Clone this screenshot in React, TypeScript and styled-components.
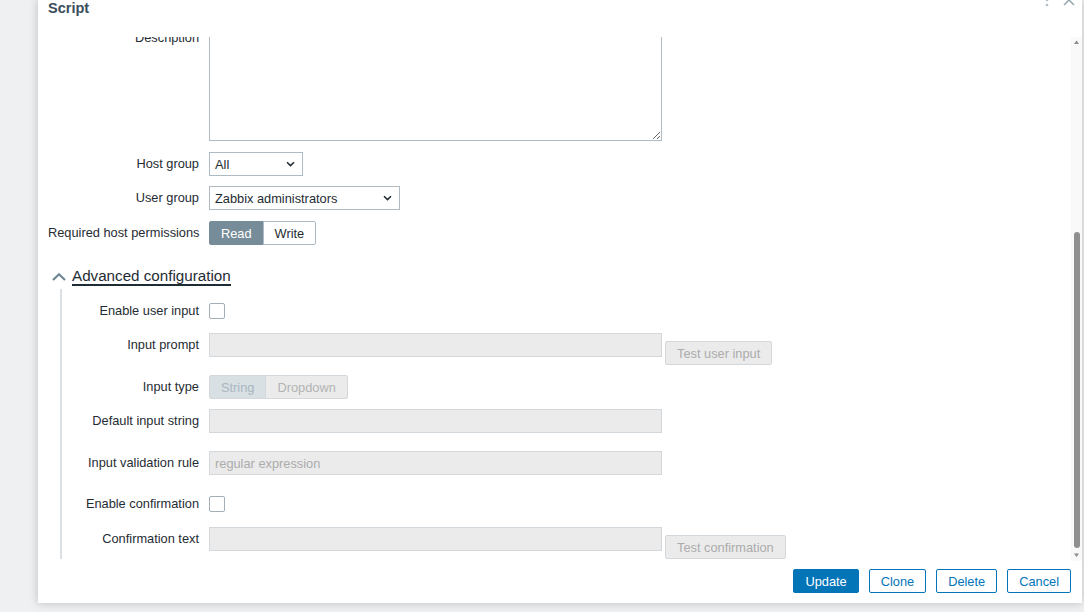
import React from "react";
import styled, {createGlobalStyle, css} from "styled-components";

const GlobalStyle = createGlobalStyle`
    html, body {
        margin: 0;
        padding: 0;
    }

    body {
        background: #eef0f2;
        font-family: "Liberation Sans", Arial, sans-serif;
        font-size: 12.8px;
        color: #1f2c33;
        overflow: hidden;
    }
`

const LABEL_W = 161
const SECTION_LABEL_W = 147

const ChevronDown = () => (
    <svg width="9" height="6" viewBox="0 0 9 6">
        <path d="M1 1.2 L4.5 4.6 L8 1.2" fill="none" stroke="#1f2c33" strokeWidth="1.5"/>
    </svg>
)

const ChevronUp = () => (
    <svg width="14" height="8" viewBox="0 0 14 8">
        <path d="M1 7 L7 1.3 L13 7" fill="none" stroke="#6f8793" strokeWidth="2.2"/>
    </svg>
)

const KebabIcon = () => (
    <svg width="16" height="16" viewBox="0 0 16 16">
        <circle cx="8" cy="3" r="1.3" fill="#b3bdc4"/>
        <circle cx="8" cy="8" r="1.3" fill="#b3bdc4"/>
        <circle cx="8" cy="13" r="1.3" fill="#b3bdc4"/>
    </svg>
)

const CloseIcon = () => (
    <svg width="16" height="16" viewBox="0 0 16 16">
        <path d="M3 3 L13 13 M13 3 L3 13" stroke="#9aa8b2" strokeWidth="1.6"/>
    </svg>
)

const ArrowUp = () => (
    <svg width="11" height="12" viewBox="0 0 11 12">
        <polygon points="3,7 8,7 5.5,3.5" fill="#8a8a8a"/>
    </svg>
)

const ArrowDown = () => (
    <svg width="11" height="12" viewBox="0 0 11 12">
        <polygon points="3,4.5 8,4.5 5.5,8" fill="#8a8a8a"/>
    </svg>
)

export default function App() {
    return (
        <>
            <GlobalStyle/>
            <Page>
                <Dialog>
                    <Header>
                        <Title>Script</Title>
                        <HeaderIcons>
                            <KebabIcon/>
                            <CloseIcon/>
                        </HeaderIcons>
                    </Header>
                    <Body>
                        <ScrollArea>
                            <Form>
                                <Row>
                                    <Label $w={LABEL_W}>Name</Label>
                                    <TextInput $w={453} defaultValue="Ping"/>
                                </Row>
                                <Row $mt={10}>
                                    <Label $w={LABEL_W}>Scope</Label>
                                    <Seg>
                                        <SegItem>Action operation</SegItem>
                                        <SegItem $on>Manual host action</SegItem>
                                        <SegItem>Manual event action</SegItem>
                                    </Seg>
                                </Row>
                                <Row $mt={10}>
                                    <Label $w={LABEL_W}>Menu path</Label>
                                    <TextInput $w={453} placeholder="<sub-menu/sub-menu/...>"/>
                                </Row>
                                <Row $mt={10}>
                                    <Label $w={LABEL_W}>Type</Label>
                                    <Seg>
                                        <SegItem>URL</SegItem>
                                        <SegItem>Webhook</SegItem>
                                        <SegItem $on>Script</SegItem>
                                        <SegItem>SSH</SegItem>
                                        <SegItem>Telnet</SegItem>
                                        <SegItem>IPMI</SegItem>
                                    </Seg>
                                </Row>
                                <Row $mt={10}>
                                    <Label $w={LABEL_W}>Execute on</Label>
                                    <Seg>
                                        <SegItem>Zabbix agent</SegItem>
                                        <SegItem>Zabbix server (proxy)</SegItem>
                                        <SegItem $on>Zabbix server</SegItem>
                                    </Seg>
                                </Row>
                                <Row $mt={10}>
                                    <Label $w={LABEL_W}>Commands</Label>
                                    <TextArea $h={60} defaultValue="ping -c 3 {HOST.CONN}; case $? in [01]) true;; *) false;; esac"/>
                                </Row>
                                <Row $mt={10}>
                                    <Label $w={LABEL_W}>Description</Label>
                                    <TextArea $h={115}/>
                                </Row>
                                <Row $mt={11}>
                                    <Label $w={LABEL_W}>Host group</Label>
                                    <SelectBox $w={94}>
                                        <span>All</span>
                                        <ChevronDown/>
                                    </SelectBox>
                                </Row>
                                <Row $mt={10}>
                                    <Label $w={LABEL_W}>User group</Label>
                                    <SelectBox $w={191}>
                                        <span>Zabbix administrators</span>
                                        <ChevronDown/>
                                    </SelectBox>
                                </Row>
                                <Row $mt={11}>
                                    <Label $w={LABEL_W}>Required host permissions</Label>
                                    <Seg>
                                        <SegItem $on>Read</SegItem>
                                        <SegItem>Write</SegItem>
                                    </Seg>
                                </Row>

                                <AdvHeader>
                                    <ChevronUp/>
                                    <AdvTitle>Advanced configuration</AdvTitle>
                                </AdvHeader>

                                <Section>
                                    <Row $mt={1}>
                                        <Label $w={SECTION_LABEL_W}>Enable user input</Label>
                                        <Checkbox type="checkbox"/>
                                    </Row>
                                    <Row $mt={10}>
                                        <Label $w={SECTION_LABEL_W}>Input prompt</Label>
                                        <TextInput $w={453} disabled/>
                                        <SideButton disabled>Test user input</SideButton>
                                    </Row>
                                    <Row $mt={10}>
                                        <Label $w={SECTION_LABEL_W}>Input type</Label>
                                        <Seg>
                                            <SegItem $on $off disabled>String</SegItem>
                                            <SegItem $off disabled>Dropdown</SegItem>
                                        </Seg>
                                    </Row>
                                    <Row $mt={10}>
                                        <Label $w={SECTION_LABEL_W}>Default input string</Label>
                                        <TextInput $w={453} disabled/>
                                    </Row>
                                    <Row $mt={18}>
                                        <Label $w={SECTION_LABEL_W}>Input validation rule</Label>
                                        <TextInput $w={453} disabled placeholder="regular expression"/>
                                    </Row>
                                    <Row $mt={17}>
                                        <Label $w={SECTION_LABEL_W}>Enable confirmation</Label>
                                        <Checkbox type="checkbox"/>
                                    </Row>
                                    <Row $mt={11}>
                                        <Label $w={SECTION_LABEL_W}>Confirmation text</Label>
                                        <TextInput $w={453} disabled/>
                                        <SideButton disabled>Test confirmation</SideButton>
                                    </Row>
                                </Section>
                            </Form>
                        </ScrollArea>
                        <Rail>
                            <RailButton><ArrowUp/></RailButton>
                            <Track>
                                <Thumb/>
                            </Track>
                            <RailButton><ArrowDown/></RailButton>
                        </Rail>
                    </Body>
                    <Footer>
                        <FooterButton $primary>Update</FooterButton>
                        <FooterButton>Clone</FooterButton>
                        <FooterButton>Delete</FooterButton>
                        <FooterButton>Cancel</FooterButton>
                    </Footer>
                </Dialog>
            </Page>
        </>
    )
}

const Page = styled.div`
    height: 612px;
    padding: 0 2px 0 38px;
    box-sizing: border-box;
`

const Dialog = styled.div`
    width: 1044px;
    height: 603px;
    background: #fff;
    box-shadow: 0 0 9px rgba(0, 0, 0, 0.22);
    display: flex;
    flex-direction: column;
`

const Header = styled.div`
    height: 37px;
    flex-shrink: 0;
    display: flex;
    align-items: flex-start;
    padding: 0 5px 0 10px;
    box-sizing: border-box;
`

const Title = styled.h2`
    flex: 1;
    margin: 0;
    font-size: 14.5px;
    line-height: 16px;
    font-weight: bold;
    color: #3a4d5b;
`

const HeaderIcons = styled.div`
    display: flex;
    gap: 6px;
    margin-top: -8px;
`

const Body = styled.div`
    flex: 1;
    min-height: 0;
    display: flex;
`

const ScrollArea = styled.div`
    flex: 1;
    overflow: hidden;
    display: flex;
    flex-direction: column;
    justify-content: flex-end;
`

const Form = styled.div`
    flex-shrink: 0;
    display: flex;
    flex-direction: column;
    padding: 0 0 2px 10px;
`

const Row = styled.div<{ $mt?: number }>`
    display: flex;
    align-items: flex-start;
    margin-top: ${p => p.$mt ?? 0}px;
`

const Label = styled.label<{ $w: number }>`
    width: ${p => p.$w}px;
    flex-shrink: 0;
    box-sizing: border-box;
    padding-right: 10px;
    text-align: right;
    line-height: 24px;
    white-space: nowrap;
`

const TextInput = styled.input<{ $w: number }>`
    width: ${p => p.$w}px;
    height: 24px;
    box-sizing: border-box;
    margin: 0;
    padding: 0 5px;
    border: 1px solid #aebbc4;
    background: #fff;
    font: inherit;
    color: inherit;

    &:disabled {
        background: #ebebeb;
        border-color: #d3d8dc;
        color: #acacac;
    }

    &::placeholder {
        color: #acacac;
    }
`

const TextArea = styled.textarea<{ $h: number }>`
    width: 453px;
    height: ${p => p.$h}px;
    box-sizing: border-box;
    margin: 0;
    padding: 4px 5px;
    border: 1px solid #aebbc4;
    font: inherit;
    color: inherit;
    resize: vertical;
`

const SelectBox = styled.div<{ $w: number }>`
    width: ${p => p.$w}px;
    height: 24px;
    box-sizing: border-box;
    border: 1px solid #aebbc4;
    display: flex;
    align-items: center;
    justify-content: space-between;
    padding: 0 7px 0 5px;
    background: #fff;
`

const Seg = styled.div`
    display: flex;
`

const SegItem = styled.button<{ $on?: boolean; $off?: boolean }>`
    height: 24px;
    margin: 0;
    padding: 0 11px;
    border: 1px solid #aebbc4;
    background: #fff;
    color: #1f2c33;
    font: inherit;
    white-space: nowrap;

    & + & {
        margin-left: -1px;
    }

    &:first-child {
        border-radius: 2px 0 0 2px;
    }

    &:last-child {
        border-radius: 0 2px 2px 0;
    }

    ${p => p.$on && css`
        background: #768d99;
        border-color: #768d99;
        color: #fff;
    `}

    ${p => p.$off && css`
        background: #ebebeb;
        border-color: #d3d8dc;
        color: #b3b3b3;
    `}

    ${p => p.$off && p.$on && css`
        background: #d8e0e4;
        color: #a9b7bf;
    `}
`

const Checkbox = styled.input`
    appearance: none;
    width: 16px;
    height: 16px;
    margin: 4px 0 0;
    box-sizing: border-box;
    border: 1px solid #a3afb7;
    border-radius: 2px;
    background: #fff;
`

const SideButton = styled.button`
    height: 24px;
    margin: 8px 0 0 3px;
    padding: 0 11px;
    border: 1px solid #d3d8dc;
    border-radius: 2px;
    background: #ebebeb;
    color: #acacac;
    font: inherit;
    white-space: nowrap;
`

const AdvHeader = styled.div`
    display: flex;
    align-items: center;
    gap: 6px;
    height: 24px;
    margin-top: 20px;
    padding-left: 4px;
`

const AdvTitle = styled.span`
    font-size: 15.2px;
    line-height: 16px;
    border-bottom: 2px solid #1f2c33;
`

const Section = styled.div`
    margin-left: 12px;
    border-left: 2px solid #dbe0e4;
    padding-top: 9px;
`

const Rail = styled.div`
    width: 11px;
    flex-shrink: 0;
    display: flex;
    flex-direction: column;
    background: #f9f9f9;
`

const RailButton = styled.div`
    height: 12px;
    display: flex;
`

const Track = styled.div`
    flex: 1;
    display: flex;
    flex-direction: column;
    justify-content: flex-end;
`

const Thumb = styled.div`
    height: 316px;
    width: 6px;
    margin: 0 2px 1px 3px;
    border-radius: 3px;
    background: #8f8f8f;
`

const Footer = styled.div`
    height: 42px;
    flex-shrink: 0;
    display: flex;
    justify-content: flex-end;
    align-items: flex-start;
    gap: 10px;
    padding: 8px 11px 0 0;
    box-sizing: border-box;
`

const FooterButton = styled.button<{ $primary?: boolean }>`
    height: 24px;
    margin: 0;
    padding: 0 11px;
    border: 1px solid #0275b8;
    border-radius: 2px;
    background: ${p => p.$primary ? "#0275b8" : "#fff"};
    color: ${p => p.$primary ? "#fff" : "#0275b8"};
    font: inherit;
`
